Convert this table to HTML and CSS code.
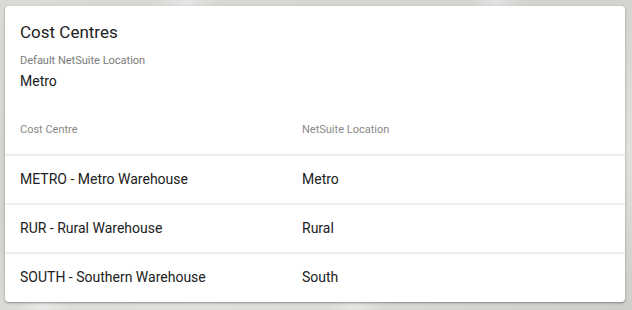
FILE: index.html
```html
<!DOCTYPE html>
<html>
<head>
<meta charset="utf-8">
<link rel="stylesheet" href="styles.css">
</head>
<body>
<div class="backdrop">
  <section class="card">
    <div class="intro">
      <h1 class="title">Cost Centres</h1>
      <div class="field-label">Default NetSuite Location</div>
      <div class="field-value">Metro</div>
    </div>
    <div class="table">
      <div class="row head">
        <div class="cell">Cost Centre</div>
        <div class="cell">NetSuite Location</div>
      </div>
      <div class="row">
        <div class="cell">METRO - Metro Warehouse</div>
        <div class="cell">Metro</div>
      </div>
      <div class="row">
        <div class="cell">RUR - Rural Warehouse</div>
        <div class="cell">Rural</div>
      </div>
      <div class="row">
        <div class="cell">SOUTH - Southern Warehouse</div>
        <div class="cell">South</div>
      </div>
    </div>
  </section>
</div>
</body>
</html>
```
FILE: styles.css
```css
* { box-sizing: border-box; }
html, body { margin: 0; padding: 0; }
body {
  font-family: Roboto, "Liberation Sans", sans-serif;
  color: #212121;
  width: 632px;
  height: 310px;
  overflow: hidden;
  background:
    linear-gradient(115deg, rgba(255,255,255,0) 0 20%, rgba(255,255,255,.35) 24%, rgba(255,255,255,0) 28% 60%, rgba(255,255,255,.3) 64%, rgba(255,255,255,0) 68%),
    linear-gradient(160deg, #dcdad7 0%, #d4d2cf 40%, #e2e0dd 70%, #cfcdca 100%);
}
.backdrop {
  padding: 6px 7px 0 5px;
}
.card {
  width: 620px;
  height: 296px;
  background: #fff;
  border-radius: 4px;
  box-shadow: 0 1px 3px rgba(0,0,0,.28), 0 1px 1px rgba(0,0,0,.12);
  padding-top: 14px;
  overflow: hidden;
}
.intro { padding: 0 15px; }
.title {
  margin: 0;
  font-size: 17px;
  line-height: 24px;
  font-weight: 400;
  color: #212121;
}
.field-label {
  margin-top: 9px;
  font-size: 11px;
  line-height: 16px;
  color: #7a7a7a;
}
.field-value {
  margin-top: 2px;
  font-size: 14px;
  line-height: 20px;
  color: #212121;
}
.table { margin-top: 14px; }
.row {
  display: grid;
  grid-template-columns: 282px 1fr;
  border-top: 2px solid #eeeeee;
  font-size: 14px;
  line-height: 20px;
}
.row .cell { padding: 13px 15px 14px; }
.row.head { border-top: 0; font-size: 11px; line-height: 16px; color: #8a8a8a; }
.row.head .cell { padding: 17px 15px 16px; }
```
